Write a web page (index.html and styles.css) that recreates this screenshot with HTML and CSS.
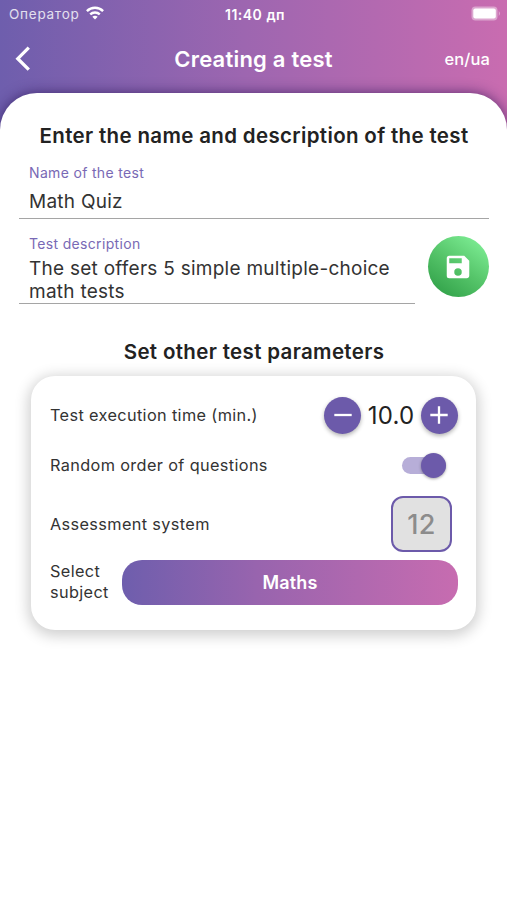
FILE: index.html
```html
<!DOCTYPE html>
<html lang="en">
<head>
<meta charset="utf-8">
<title>Creating a test</title>
<link rel="stylesheet" href="styles.css">
</head>
<body>
<div class="screen">
  <header class="header">
    <div class="status">
      <div class="carrier"><span class="carrier-name">Оператор</span>
        <svg class="wifi" viewBox="0 0 18 14" width="18" height="14"><g fill="none" stroke="#fff" stroke-width="2.4"><path d="M.9 5.1C5.4.6 12.600.6 17.100 5.100"/><path d="M4.200 8.400c2.700-2.600 6.900-2.600 9.600 0"/></g><path fill="#fff" d="M6.300 10.800c1.600-1.300 3.800-1.300 5.400 0L9 13.600z"/></svg>
      </div>
      <time class="clock">11:40 дп</time>
      <svg class="battery" viewBox="0 0 30 15" width="30" height="15"><rect x=".5" y=".5" width="26" height="14" rx="4" fill="#fff" opacity=".4"/><rect x="2.300" y="2.500" width="22.500" height="10" rx="2" fill="#fff"/><path d="M27.800 5v5q2-2.500 0-5z" fill="#fff" opacity=".5"/></svg>
    </div>
    <nav class="nav">
      <svg class="back" viewBox="0 0 16 26" width="16" height="26"><path d="M13.800 1.700L2.800 12.700l11 11" fill="none" stroke="#fff" stroke-width="3.300"/></svg>
      <h1 class="title">Creating a test</h1>
      <span class="lang">en/ua</span>
    </nav>
  </header>
  <main class="sheet">
    <h2 class="heading heading-name">Enter the name and description of the test</h2>
    <div class="field field-name">
      <label class="label">Name of the test</label>
      <div class="value">Math Quiz</div>
    </div>
    <div class="description-row">
      <div class="field field-description">
        <label class="label">Test description</label>
        <div class="value">The set offers 5 simple multiple-choice<br>math tests</div>
      </div>
      <button class="save" aria-label="Save">
        <svg viewBox="0 0 24 24" width="30" height="30"><path fill="#fff" d="M17 3H5a2 2 0 0 0-2 2v14a2 2 0 0 0 2 2h14c1.100 0 2-.9 2-2V7zm-5 16a3 3 0 1 1 0-6 3 3 0 0 1 0 6zm3-10H5V5h10z"/></svg>
      </button>
    </div>
    <h2 class="heading heading-params">Set other test parameters</h2>
    <section class="card">
      <div class="row row-time">
        <span class="row-label time-label">Test execution time (min.)</span>
        <div class="stepper">
          <button class="step" aria-label="Less"><svg viewBox="0 0 20 20" width="20" height="20"><path d="M1.300 10h17.400" stroke="#fff" stroke-width="2.300"/></svg></button>
          <span class="amount">10.0</span>
          <button class="step" aria-label="More"><svg viewBox="0 0 20 20" width="20" height="20"><path d="M1.300 10h17.400M10 1.300v17.400" stroke="#fff" stroke-width="2.300"/></svg></button>
        </div>
      </div>
      <div class="row row-random">
        <span class="row-label random-label">Random order of questions</span>
        <span class="switch"><span class="thumb"></span></span>
      </div>
      <div class="row row-system">
        <span class="row-label system-label">Assessment system</span>
        <span class="score">12</span>
      </div>
      <div class="row row-subject">
        <span class="row-label subject-label">Select<br>subject</span>
        <button class="subject">Maths</button>
      </div>
    </section>
  </main>
</div>
</body>
</html>
```
FILE: styles.css
```css
* { box-sizing: border-box; }
body { margin: 0; font-family: Inter, "Liberation Sans", sans-serif; color: #222; background: #fff; }
button { border: 0; padding: 0; font: inherit; color: inherit; }
svg { display: block; flex: none; }
h1, h2 { margin: 0; font-weight: 600; white-space: nowrap; }
.screen { height: 900px; overflow: hidden; background: linear-gradient(90deg, #6e5ead 0, #9d66b0 48%, #c96cb0 100%) 0 0 / 100% 130px no-repeat; }
.header { height: 93px; color: #fff; }
.status { height: 28px; padding: 0 6px 0 9px; display: grid; grid-template-columns: 1fr auto 1fr; align-items: center; }
.carrier { display: flex; align-items: center; gap: 6px; }
.carrier-name { font-size: 13.500px; letter-spacing: .75px; opacity: .8; }
.wifi { margin-top: -2px; }
.clock { font-size: 14px; font-weight: 600; letter-spacing: .5px; }
.battery { justify-self: end; margin-top: -2px; }
.nav { height: 62px; padding: 0 17px 0 15px; display: grid; grid-template-columns: 1fr auto 1fr; align-items: center; }
.title { font-size: 22px; letter-spacing: .22px; position: relative; left: 1px; }
.lang { justify-self: end; font-size: 16.500px; font-weight: 500; letter-spacing: .1px; }
.sheet { height: 807px; background: #fff; border-radius: 37px 37px 0 0; padding: 29px 18px 0 19px; box-shadow: 0 0 13px rgba(35, 15, 80, .65); }
.heading { font-size: 20.500px; line-height: 28px; text-align: center; letter-spacing: .34px; }
.field { border-bottom: 1.500px solid #a5a5a5; padding-left: 10px; white-space: nowrap; }
.label { display: block; font-size: 14px; line-height: 18px; color: #7969b5; letter-spacing: .33px; }
.value { font-size: 19px; line-height: 23px; color: #333; letter-spacing: .26px; }
.field-name { height: 55px; margin-top: 14px; }
.field-name .value { margin-top: 8px; }
.description-row { display: flex; justify-content: space-between; margin-top: 16px; }
.field-description { width: 396px; height: 69px; }
.field-description .value { margin-top: 4px; }
.save { width: 61px; height: 61px; margin-top: 1px; border-radius: 50%; display: grid; place-items: center; background: linear-gradient(35deg, #2e9e46 5%, #56c56a 50%, #80f097 94%); }
.save svg { margin-right: 1px; }
.heading-params { margin-top: 34px; }
.card { width: 445px; height: 254px; margin: 10px 0 0 12px; padding: 17px 18px 0 19px; border-radius: 24px; background: #fff; box-shadow: 0 3px 14px 3px rgba(0, 0, 0, .19); }
.row { display: flex; align-items: center; justify-content: space-between; }
.row-label { font-size: 16.300px; line-height: 21px; color: #333; white-space: nowrap; letter-spacing: .36px; }
.row-time { height: 44px; }
.stepper { display: flex; align-items: center; justify-content: space-between; width: 134px; }
.step { width: 37px; height: 37px; border-radius: 50%; background: #6c5aaa; display: grid; place-items: center; box-shadow: 0 2px 4px rgba(0, 0, 0, .3); }
.amount { font-size: 24px; color: #222; letter-spacing: .2px; }
.row-random { height: 56px; padding-right: 12px; }
.switch { width: 44px; height: 17px; border-radius: 9px; background: #b7aed8; display: flex; align-items: center; justify-content: flex-end; }
.thumb { width: 25px; height: 25px; flex: none; border-radius: 50%; background: #6c5aaa; box-shadow: 0 1px 3px rgba(0, 0, 0, .35); }
.row-system { height: 62px; padding-right: 6px; }
.score { width: 61px; height: 56px; border: 2px solid #6c5aaa; border-radius: 12px; background: #e1e1e1; color: #8c8c8c; font-size: 27px; font-weight: 500; letter-spacing: .4px; display: grid; place-items: center; }
.row-subject { height: 54px; }
.subject { width: 336px; height: 45px; border-radius: 20px; background: linear-gradient(90deg, #6e5ead, #9864ae 40%, #c76cb0); color: #fff; font-size: 18px; font-weight: 600; letter-spacing: .15px; }
```
